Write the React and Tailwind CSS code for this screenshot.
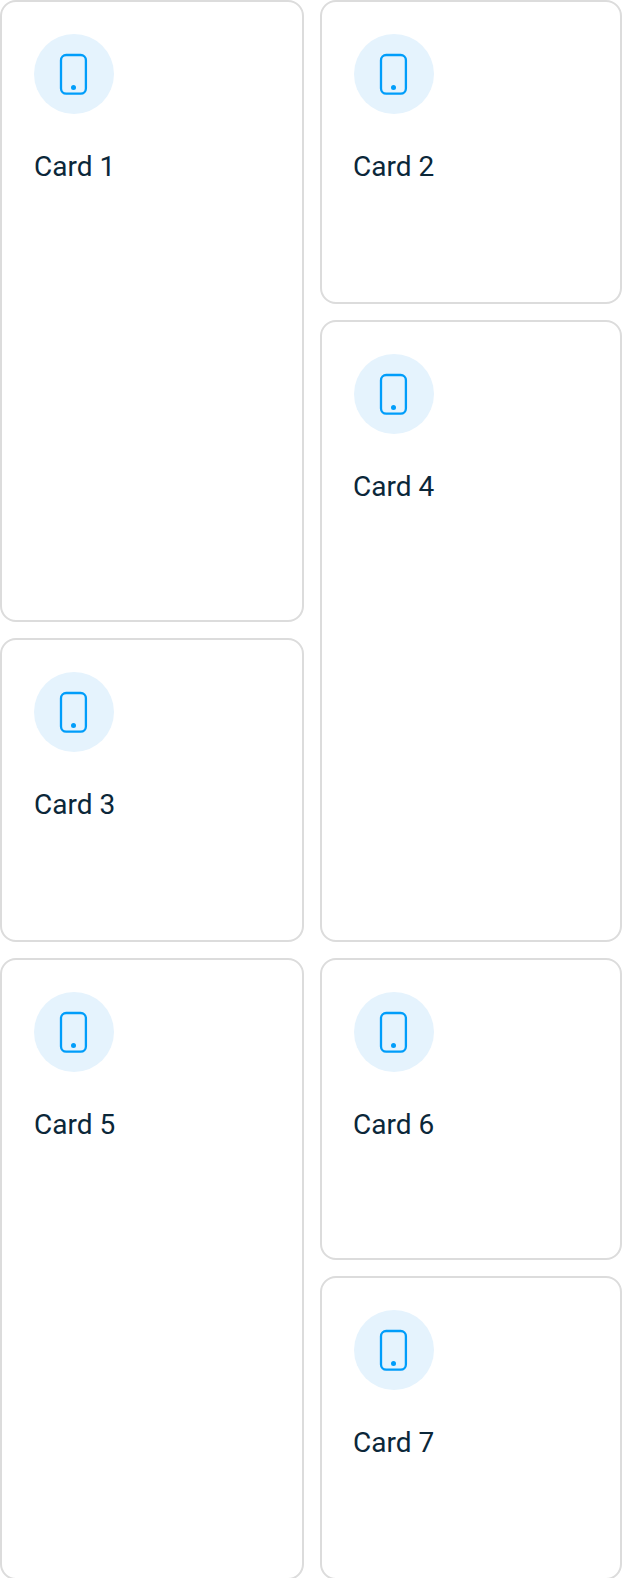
const cards = [
  { n: 1, area: "col-start-1 row-start-1 row-span-3", title: "" },
  { n: 2, area: "col-start-2 row-start-1", title: "-ml-px" },
  { n: 3, area: "col-start-1 row-start-4 row-span-2", title: "" },
  { n: 4, area: "col-start-2 row-start-2 row-span-4", title: "-ml-px" },
  { n: 5, area: "col-start-1 row-start-6 row-span-2", title: "" },
  { n: 6, area: "col-start-2 row-start-6", title: "-ml-px" },
  { n: 7, area: "col-start-2 row-start-7", title: "-ml-px" },
];

function PhoneIcon() {
  return (
    <svg width="80" height="80" viewBox="0 0 80 80" fill="none" aria-hidden="true">
      <rect x="27" y="21" width="24.9" height="38.6" rx="5.2" stroke="#009dfa" strokeWidth="2.3" />
      <circle cx="39.5" cy="53.5" r="2.5" fill="#009dfa" />
    </svg>
  );
}

function Card({ n, area, title }) {
  return (
    <article className={`rounded-2xl border-2 border-[#dcdcdc] bg-white p-8 ${area}`}>
      <div className="size-20 rounded-full bg-[#e5f3fd]">
        <PhoneIcon />
      </div>
      <h2 className={`mt-[33px] text-[28px] leading-10 text-[#0b2739] ${title}`}>Card {n}</h2>
    </article>
  );
}

export default function App() {
  return (
    <main className="grid h-[1578px] w-[622px] grid-cols-[304px_302px] grid-rows-[304px_142px_144px_144px_144px_302px_304px] gap-4 overflow-hidden bg-white font-['Roboto',sans-serif]">
      {cards.map((card) => (
        <Card key={card.n} {...card} />
      ))}
    </main>
  );
}
